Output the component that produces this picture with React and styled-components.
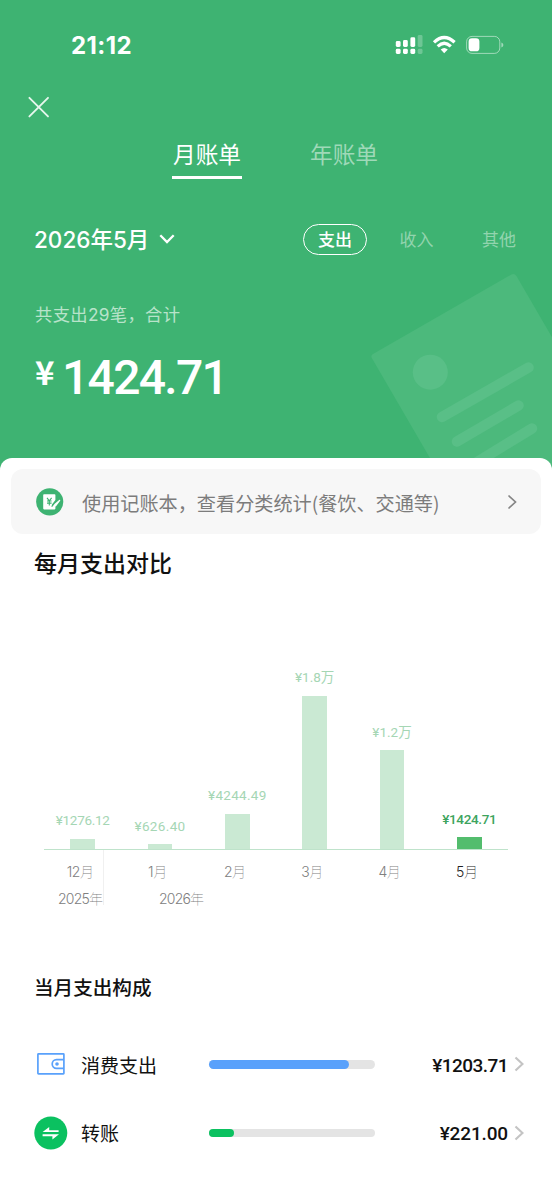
import React from "react";
import styled, { createGlobalStyle } from "styled-components";

const GlobalStyle = createGlobalStyle`
  * {
    box-sizing: border-box;
  }

  body {
    margin: 0;
    background: #fff;
    font-family: "Noto Sans CJK SC", sans-serif;
  }
`;

const Page = styled.div`
  width: 552px;
  height: 1200px;
  overflow: hidden;
  background: #fff;
`;

// Green top area
const Header = styled.header`
  position: relative;
  height: 470px;
  background: #3eb372;
  color: #fff;
`;

const StatusBar = styled.div`
  display: flex;
  justify-content: space-between;
  height: 90px;
  padding: 30px 48px 0 71px;
`;

const Clock = styled.div`
  height: 30px;
  line-height: 31px;
  font-family: Inter, sans-serif;
  font-size: 24px;
  font-weight: 700;
  letter-spacing: 0.4px;
`;

const StatusIcons = styled.svg`
  display: block;
  width: 110px;
  height: 30px;
`;

const CloseRow = styled.div`
  height: 41px;
  padding: 6px 0 0 28px;

  svg {
    display: block;
  }
`;

const Tabs = styled.div`
  display: flex;
  gap: 67px;
  height: 79px;
  padding-left: 172px;
`;

const Tab = styled.div`
  width: 70px;
  height: 48px;
  line-height: 46px;
  text-align: center;
  white-space: nowrap;
  font-size: 22.7px;
  color: ${({ $active }) => ($active ? "#fff" : "#9fd9b8")};
  border-bottom: 3px solid ${({ $active }) => ($active ? "#fff" : "transparent")};
`;

const FilterRow = styled.div`
  display: flex;
  align-items: center;
  height: 58px;
  padding-left: 34px;
`;

const Month = styled.div`
  display: flex;
  align-items: center;
  gap: 10px;
  width: 269px;
  font-family: Inter, "Noto Sans CJK SC", sans-serif;
  font-size: 22.5px;
  font-weight: 500;
  white-space: nowrap;
`;

const MonthText = styled.span`
  padding-bottom: 3px;
`;

const Filters = styled.div`
  display: flex;
  align-items: center;
`;

const Filter = styled.div`
  height: 31px;
  margin-right: ${({ $gap }) => $gap || 0}px;
  line-height: 28px;
  font-size: 17px;
  font-weight: ${({ $active }) => ($active ? 500 : 400)};
  color: ${({ $active }) => ($active ? "#fff" : "#92d4ae")};
  padding: ${({ $active }) => ($active ? "0 14px" : "0")};
  border: 1.5px solid ${({ $active }) => ($active ? "#fff" : "transparent")};
  border-width: ${({ $active }) => ($active ? "1.5px" : "1.5px 0")};
  border-radius: 16px;
`;

const Summary = styled.div`
  height: 90px;
  padding: 34px 0 0 35px;
  line-height: 26px;
  font-family: Inter, "Noto Sans CJK SC", sans-serif;
  font-size: 17.3px;
  letter-spacing: 0.35px;
  color: #b8e3ca;
`;

const Total = styled.div`
  display: flex;
  height: 70px;
  line-height: 61px;
  padding-left: 35px;
  font-family: Roboto, sans-serif;
  font-size: 48px;
  font-weight: 500;
  letter-spacing: -1.7px;
  margin-top: -11px;
`;

const Currency = styled.span`
  width: 27px;
  font-family: "Noto Sans CJK SC", sans-serif;
  font-size: 33px;
  font-weight: 700;
  line-height: 48px;
`;

const Receipt = styled.svg`
  position: absolute;
  right: 0;
  top: 268px;
  width: 190px;
  height: 202px;
`;

// White sheet that slides over the header
const Sheet = styled.main`
  position: relative;
  height: 742px;
  margin-top: -12px;
  padding-top: 11px;
  border-radius: 12px 12px 0 0;
  background: #fff;
`;

const Banner = styled.div`
  display: flex;
  align-items: center;
  height: 65px;
  margin: 0 11px;
  padding: 0 24px 0 25px;
  border-radius: 12px;
  background: #f7f7f7;

  svg {
    flex-shrink: 0;
  }
`;

const BannerText = styled.div`
  flex: 1;
  padding: 2px 0 0 18px;
  font-size: 19.15px;
  color: #7c7c7c;
  white-space: nowrap;
`;

const Title = styled.h2`
  margin: 0;
  padding-left: 34px;
  height: ${({ $height }) => $height}px;
  line-height: ${({ $line }) => $line}px;
  font-size: ${({ $size }) => $size}px;
  font-weight: 500;
  color: #111;
`;

const Chart = styled.div`
  display: flex;
  align-items: flex-end;
  height: 256px;
  margin: 0 44px;
  border-bottom: 1px solid #bfe3cb;
`;

const Column = styled.div`
  display: flex;
  flex: 1;
  flex-direction: column;
  align-items: center;
`;

const Amount = styled.div`
  height: 28.5px;
  line-height: 20px;
  font-family: Roboto, "Noto Sans CJK SC", sans-serif;
  font-size: 13.5px;
  font-weight: ${({ $active }) => ($active ? 500 : 400)};
  letter-spacing: ${({ $spacing }) => $spacing}px;
  color: ${({ $active }) => ($active ? "#3da45e" : "#a5d6b4")};
  white-space: nowrap;
`;

const Bar = styled.div`
  width: 24.5px;
  background: ${({ $active }) => ($active ? "#53bd6d" : "#cae9d3")};
`;

const Axis = styled.div`
  display: flex;
  height: 118px;
  padding: 0 44px;
`;

const YearGroup = styled.div`
  width: ${({ $width }) => $width}px;
  height: 55px;
  border-right: ${({ $divided }) => ($divided ? "1px solid #f0f0f0" : "0")};
  font-family: Inter, "Noto Sans CJK SC", sans-serif;
  font-size: 14px;
  font-weight: 300;
  letter-spacing: -0.4px;
  white-space: nowrap;
  color: #808080;
`;

const Months = styled.div`
  display: flex;
  height: 36px;
  padding-top: 12px;
  padding-left: ${({ $indent }) => $indent || 0}px;
  line-height: 20px;
`;

const MonthLabel = styled.div`
  width: 77.33px;
  padding-right: 5px;
  flex-shrink: 0;
  text-align: center;
  color: ${({ $active }) => ($active ? "#222" : "inherit")};
`;

const Unit = styled.span`
  font-weight: 100;
`;

const Year = styled.div`
  padding-left: ${({ $indent }) => $indent}px;
  line-height: 26px;
  letter-spacing: -0.8px;
`;

const Rows = styled.div`
  padding-top: 24px;
`;

const Row = styled.div`
  display: flex;
  align-items: center;
  height: 68.5px;
  padding: 0 28px 0 34px;
`;

const RowIcon = styled.div`
  width: 47px;

  svg {
    display: block;
  }
`;

const RowLabel = styled.div`
  width: 127.5px;
  font-size: 19px;
  color: #111;
`;

const Track = styled.div`
  width: 166px;
  height: 8.5px;
  border-radius: 5px;
  background: #e4e4e4;
`;

const Fill = styled.div`
  height: 100%;
  border-radius: 5px;
  background: ${({ $color }) => $color};
`;

const Value = styled.div`
  flex: 1;
  padding: 2px 6px 0 0;
  text-align: right;
  font-family: Roboto, sans-serif;
  font-size: 19px;
  font-weight: 500;
  color: #111;
  letter-spacing: ${({ $spacing }) => $spacing}px;
`;

const Chevron = ({ width, height, color, stroke }) => (
  <svg width={width} height={height} viewBox="0 0 10 16" fill="none">
    <path d="M1.5 1.5L8.5 8L1.5 14.5" stroke={color} strokeWidth={stroke} />
  </svg>
);

const WalletIcon = () => (
  <svg width="34" height="34" viewBox="0 0 34 34" fill="none" stroke="#59a1fb">
    <rect x="3.9" y="6.9" width="26" height="20" rx="0.6" strokeWidth="1.7" />
    <path d="M30 12.7H22.5a4.3 4.3 0 0 0 0 8.6H30" strokeWidth="1.7" />
    <circle cx="23" cy="17" r="1.8" fill="#59a1fb" stroke="none" />
  </svg>
);

const TransferIcon = () => (
  <svg width="34" height="34" viewBox="0 0 34 34" fill="none">
    <circle cx="16.8" cy="17" r="16.5" fill="#0bc160" />
    <path d="M24.6 16.1H8.6L15.2 10.9V14.2H24.6Z" fill="#fff" />
    <path d="M8.6 18.3H25L18.4 23.5V20.2H8.6Z" fill="#fff" />
  </svg>
);

const LedgerIcon = () => (
  <svg width="28" height="28" viewBox="0 0 28 28" fill="none">
    <circle cx="13.7" cy="13.8" r="13.6" fill="#3eb372" />
    <path
      d="M8 6.3H18.6a.8.8 0 0 1 .8.8V12L16 16.4L15.4 19L18 18L19.4 16.6V20.6a.8.8 0 0 1-.8.8H8a.8.8 0 0 1-.8-.8V7.1a.8.8 0 0 1 .8-.8Z"
      fill="#fff"
    />
    <path
      d="M11 9.8L13.3 12.8L15.6 9.8M11 13H15.6M11 15.1H15.6M13.3 12.8V17.6"
      stroke="#3eb372"
      strokeWidth="1.1"
    />
    <path
      d="M23.6 12.4L18.9 16.6L17.5 18.4L19.7 17.5L23.6 12.4Z"
      fill="#fff"
      stroke="#fff"
      strokeWidth="1.4"
      strokeLinejoin="round"
    />
  </svg>
);

const bars = [
  { label: "¥1276.12", height: 10.5, spacing: -0.3 },
  { label: "¥626.40", height: 5, spacing: 0.35 },
  { label: "¥4244.49", height: 35.5, spacing: 0.3 },
  { label: "¥1.8万", height: 153.5, spacing: 0 },
  { label: "¥1.2万", height: 99, spacing: 0 },
  { label: "¥1424.71", height: 12, spacing: -0.35, active: true },
];

const rows = [
  {
    name: "消费支出",
    value: "¥1203.71",
    percent: 84.5,
    color: "#59a1fb",
    icon: <WalletIcon />,
    spacing: -0.55,
  },
  {
    name: "转账",
    value: "¥221.00",
    percent: 15.5,
    color: "#0bc160",
    icon: <TransferIcon />,
    spacing: -0.15,
  },
];

const App = () => (
  <Page>
    <GlobalStyle />
    <Header>
      <Receipt viewBox="362 268 190 202" fill="none">
        <path
          d="M373 354L511.5 274.5Q514.5 273 516.3 275.8L600 420V520H466L371.8 358Q370.6 355.5 373 354Z"
          fill="#4cb97c"
        />
        <circle cx="430.3" cy="372.2" r="17.5" fill="#59bf87" />
        <path
          d="M442 417L528.5 367.5M457 441.5L518.5 405.5M456 475L532 428.5"
          stroke="#59bf87"
          strokeWidth="10.5"
          strokeLinecap="round"
        />
      </Receipt>

      <StatusBar>
        <Clock>21:12</Clock>
        <StatusIcons viewBox="394 30 110 30" fill="#fff">
          <rect x="395.8" y="41" width="4.8" height="6" rx="1.4" />
          <rect x="403" y="40" width="4.8" height="7" rx="1.4" />
          <rect x="410.4" y="37.3" width="4.8" height="9.7" rx="1.4" />
          <rect x="417.7" y="35" width="4.8" height="12" rx="1.4" opacity="0.25" />
          <rect x="395.8" y="48.8" width="4.8" height="5.2" rx="1.4" />
          <rect x="403" y="48.8" width="4.8" height="5.2" rx="1.4" />
          <rect x="410.4" y="48.8" width="4.8" height="5.2" rx="1.4" />
          <rect x="417.7" y="48.8" width="4.8" height="5.2" rx="1.4" opacity="0.25" />
          <g fill="none" stroke="#fff" strokeWidth="3.2">
            <path d="M434 42.3Q444.2 32.7 454.6 42.3" />
            <path d="M437.7 46.3Q444.2 40.2 450.8 46.3" />
          </g>
          <path d="M440.7 49.6Q444.2 46.6 447.8 49.6L444.2 53.2Z" />
          <rect x="466.6" y="36.4" width="33.2" height="17" rx="5.4" fill="none" stroke="#fff" strokeOpacity="0.5" />
          <rect x="468.6" y="38.3" width="10.8" height="13" rx="3.4" />
          <path d="M501.4 42.5Q503.4 43.2 503.4 45T501.4 47.5Z" opacity="0.5" />
        </StatusIcons>
      </StatusBar>

      <CloseRow>
        <svg width="22" height="22" viewBox="0 0 22 22" fill="none">
          <path
            d="M1.4 1.8L20 20.4M20 1.8L1.4 20.4"
            stroke="#e6f6ec"
            strokeWidth="1.9"
            strokeLinecap="round"
          />
        </svg>
      </CloseRow>

      <Tabs>
        <Tab $active>月账单</Tab>
        <Tab>年账单</Tab>
      </Tabs>

      <FilterRow>
        <Month>
          <MonthText>2026年5月</MonthText>
          <svg width="16" height="12" viewBox="0 0 16 12" fill="none">
            <path d="M1.3 2.2L8 9L14.7 2.2" stroke="#fff" strokeWidth="2.3" />
          </svg>
        </Month>
        <Filters>
          <Filter $active $gap={32.5}>
            支出
          </Filter>
          <Filter $gap={48.5}>收入</Filter>
          <Filter>其他</Filter>
        </Filters>
      </FilterRow>

      <Summary>共支出29笔，合计</Summary>
      <Total>
        <Currency>¥</Currency>
        1424.71
      </Total>
    </Header>

    <Sheet>
      <Banner>
        <LedgerIcon />
        <BannerText>使用记账本，查看分类统计(餐饮、交通等)</BannerText>
        <Chevron width={10} height={16} color="#858585" stroke={1.7} />
      </Banner>

      <Title $height={60} $line={57} $size={23}>
        每月支出对比
      </Title>

      <Chart>
        {bars.map((bar) => (
          <Column key={bar.label}>
            <Amount $active={bar.active} $spacing={bar.spacing}>
              {bar.label}
            </Amount>
            <Bar $active={bar.active} style={{ height: bar.height }} />
          </Column>
        ))}
      </Chart>

      <Axis>
        <YearGroup $width={60} $divided>
          <Months>
            <MonthLabel>
              12<Unit>月</Unit>
            </MonthLabel>
          </Months>
          <Year $indent={14}>
            2025<Unit>年</Unit>
          </Year>
        </YearGroup>
        <YearGroup $width={404}>
          <Months $indent={17.3}>
            {[1, 2, 3, 4, 5].map((month) => (
              <MonthLabel key={month} $active={month === 5}>
                {month}
                <Unit>月</Unit>
              </MonthLabel>
            ))}
          </Months>
          <Year $indent={55}>
            2026<Unit>年</Unit>
          </Year>
        </YearGroup>
      </Axis>

      <Title $height={38} $line={38} $size={19.6}>
        当月支出构成
      </Title>

      <Rows>
        {rows.map((row) => (
          <Row key={row.name}>
            <RowIcon>{row.icon}</RowIcon>
            <RowLabel>{row.name}</RowLabel>
            <Track>
              <Fill $color={row.color} style={{ width: `${row.percent}%` }} />
            </Track>
            <Value $spacing={row.spacing}>{row.value}</Value>
            <Chevron width={10} height={16} color="#c4c4c4" stroke={2.2} />
          </Row>
        ))}
      </Rows>
    </Sheet>
  </Page>
);

export default App;
